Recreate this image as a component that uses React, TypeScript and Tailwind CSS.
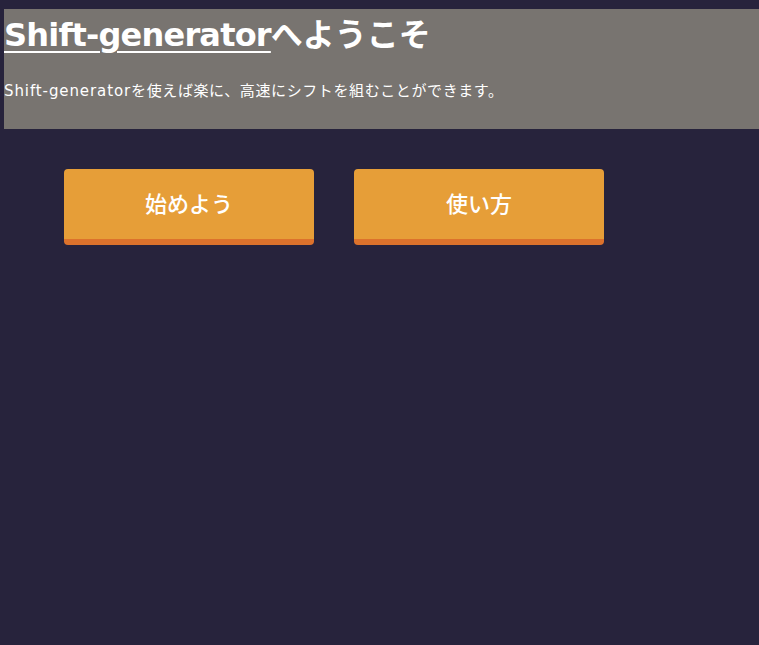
const latin = { fontFamily: '"DejaVu Sans", "Noto Sans CJK JP", sans-serif' };

export default function App() {
  return (
    <div
      className="min-h-[645px] w-full bg-[#27233c] pt-[9px] pl-[4px]"
      style={{ fontFamily: '"Noto Sans CJK JP", sans-serif' }}
    >
      <header className="h-[120px] bg-[#787470] text-white">
        <h1 className="pt-[3px] text-[32px] font-bold leading-[40px]">
          <a
            href="#"
            style={latin}
            className="tracking-[-0.8px] underline decoration-[2px] underline-offset-[5px]"
          >
            Shift-generator
          </a>
          へようこそ
        </h1>
        <p className="mt-[24px] text-[15px] leading-[22px]">
          <span style={latin} className="tracking-[0.9px]">
            Shift-generator
          </span>
          <span className="tracking-[0.6px]">
            を使えば楽に、高速にシフトを組むことができます。
          </span>
        </p>
      </header>
      <div className="flex gap-[40px] pl-[60px] pt-[40px]">
        <button className="h-[76px] w-[250px] rounded-[4px] border-b-[6px] border-[#dc722c] bg-[#e69e38] pb-[4px] text-[22px] font-medium text-white">
          始めよう
        </button>
        <button className="h-[76px] w-[250px] rounded-[4px] border-b-[6px] border-[#dc722c] bg-[#e69e38] pb-[4px] text-[22px] font-medium text-white">
          使い方
        </button>
      </div>
    </div>
  );
}
